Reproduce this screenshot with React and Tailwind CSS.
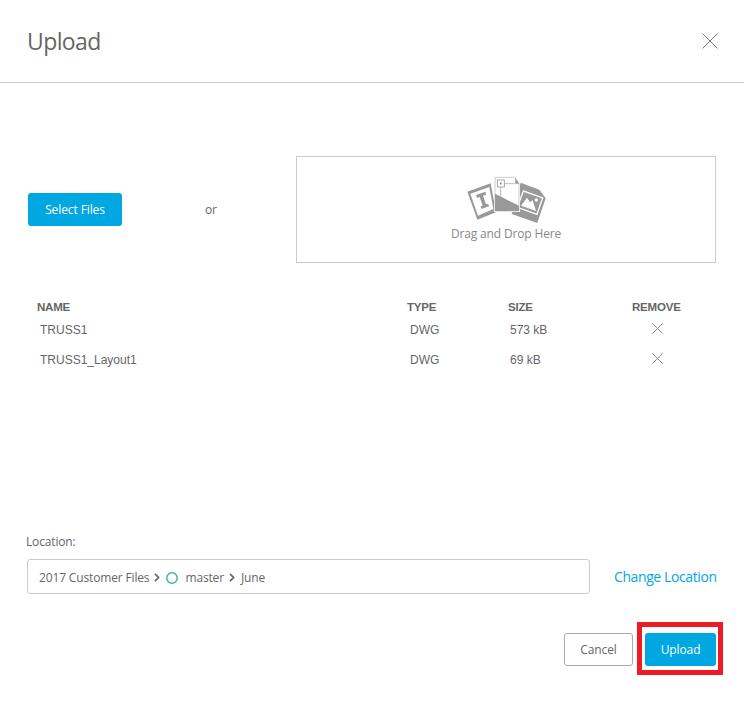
import React from "react";

const files = [
  { name: "TRUSS1", type: "DWG", size: "573 kB" },
  { name: "TRUSS1_Layout1", type: "DWG", size: "69 kB" },
];

const Cross = ({ size, color, width = 1 }) => (
  <svg width={size} height={size} viewBox="0 0 16 16" fill="none" stroke={color} strokeWidth={width}>
    <path d="M0.5 0.5 L15.5 15.5 M15.5 0.5 L0.5 15.5" />
  </svg>
);

const Chevron = () => (
  <svg width="6" height="9" viewBox="0 0 6 9" fill="none" stroke="#666" strokeWidth="1.7">
    <path d="M1 0.8 L4.6 4.5 L1 8.2" />
  </svg>
);

const Ring = () => (
  <svg width="12" height="12" viewBox="0 0 12 12" fill="none" stroke="#3fb8a0" strokeWidth="1.5">
    <circle cx="6" cy="6" r="5.2" />
  </svg>
);

const DropIcon = () => (
  <svg width="85" height="53.33" viewBox="70 10 255 160">
    {/* left page */}
    <path d="M80 66 L150 41 L166 128 L110 150 Z" fill="#999" />
    <path d="M89 72 L146 52 L158 118 L112 138 Z" fill="#fff" />
    <path d="M106 76 L134 66 L136 75 L127 78 L136 104 L143 102 L145 110 L122 118 L120 110 L126 108 L117 82 L109 85 Z" fill="#999" />
    {/* right page */}
    <path d="M240 39 L296 60 L315 86 L290 160 L213 133 Z" fill="#999" />
    <path d="M248 64 L306 85 L289 134 L230 113 Z" fill="none" stroke="#fff" strokeWidth="4" />
    <path d="M241 108 L259 84 L268 98 L276 92 L286 124 Z" fill="#fff" />
    <circle cx="287" cy="91" r="5" fill="#fff" />
    {/* middle sheet */}
    <path d="M160 20 L225 20 L238 40 L238 127 L160 127 Z" fill="#fff" />
    <path d="M163 23 L222 23 L235 42 L235 124 L163 124 Z" fill="#fff" stroke="#999" strokeWidth="1.5" />
    <path d="M163 72 L235 108 L235 124 L163 124 Z" fill="#999" />
    <path d="M224 24 L236 42 L224 42 Z" fill="#999" />
    <path d="M191 42 L224 42" stroke="#999" strokeWidth="2" fill="none" />
    <path d="M180 51 L180 86" stroke="#999" strokeWidth="2" fill="none" />
    <rect x="170" y="31" width="21" height="21" fill="#fff" stroke="#999" strokeWidth="2.5" />
    <rect x="178" y="39" width="5" height="5" fill="#777" />
  </svg>
);

export default function App() {
  return (
    <div className="w-[744px] h-[705px] bg-white flex flex-col text-[#666] font-['Open_Sans',sans-serif]">
      {/* Header */}
      <div className="h-[83px] shrink-0 border-b border-[#ccc] flex items-center justify-between pl-[27px] pr-[26px]">
        <h1 className="text-[23px] leading-none text-[#666] mt-[1px] tracking-[-0.6px]">Upload</h1>
        <Cross size={16} color="#777" />
      </div>

      {/* Pick or drop */}
      <div className="mt-[73px] ml-[28px] flex items-center h-[107px]">
        <button className="w-[94px] h-[33px] rounded-[3px] bg-[#00a7e1] text-white text-[12px] pt-[1px] tracking-[-0.1px]">Select Files</button>
        <span className="ml-[83px] w-[91px] text-[12px] mt-[1px] tracking-[-0.2px]">or</span>
        <div className="w-[420px] h-[107px] border border-[#ccc] flex flex-col items-center pt-[16px]">
          <DropIcon />
          <span className="text-[12px] leading-none mt-[2px] text-[#888] tracking-[-0.15px]">Drag and Drop Here</span>
        </div>
      </div>

      {/* File list */}
      <div className="mt-[36px] ml-[37px] font-['Liberation_Sans',sans-serif]">
        <div className="grid grid-cols-[370px_101px_124px_80px] h-[16px] items-center text-[11.5px] font-bold tracking-[-0.2px]">
          <span>NAME</span>
          <span>TYPE</span>
          <span>SIZE</span>
          <span>REMOVE</span>
        </div>
        {files.map((file) => (
          <div key={file.name} className="grid grid-cols-[370px_101px_124px_80px] h-[30px] items-center text-[12px]">
            <span className="pl-[3px]">{file.name}</span>
            <span className="pl-[3px]">{file.type}</span>
            <span className="pl-[2px]">{file.size}</span>
            <span className="pl-[20px] -mt-[3px]">
              <Cross size={11} color="#888" width={1.4} />
            </span>
          </div>
        ))}
      </div>

      {/* Location */}
      <div className="mt-[159px] ml-[27px]">
        <span className="block text-[12px] leading-[16px] -ml-[1px] tracking-[-0.15px]">Location:</span>
        <div className="mt-[9px] flex items-center">
          <div className="w-[563px] h-[35px] border border-[#ccc] rounded-[3px] flex items-center pl-[11px] pt-[2px] text-[12px] tracking-[-0.15px]">
            <span>2017 Customer Files</span>
            <span className="ml-[5px]"><Chevron /></span>
            <span className="ml-[6px]"><Ring /></span>
            <span className="ml-[7px]">master</span>
            <span className="ml-[5px]"><Chevron /></span>
            <span className="ml-[6px]">June</span>
          </div>
          <a className="ml-[24px] text-[14px] text-[#00a7e1] whitespace-nowrap tracking-[-0.4px]">Change Location</a>
        </div>
      </div>

      {/* Actions */}
      <div className="mt-[39px] ml-[564px] flex gap-[12px]">
        <button className="w-[69px] h-[33px] rounded-[3px] border border-[#aaa] bg-white text-[12px] pt-[1px] tracking-[-0.1px]">Cancel</button>
        <div className="relative">
          <button className="w-[71px] h-[33px] rounded-[3px] bg-[#00a7e1] text-white text-[12px] pt-[1px] tracking-[-0.1px]">Upload</button>
          <div className="absolute -left-[8px] -right-[7px] -top-[11px] -bottom-[9px] border-[5px] border-[#ed1c24] pointer-events-none"></div>
        </div>
      </div>
    </div>
  );
}
